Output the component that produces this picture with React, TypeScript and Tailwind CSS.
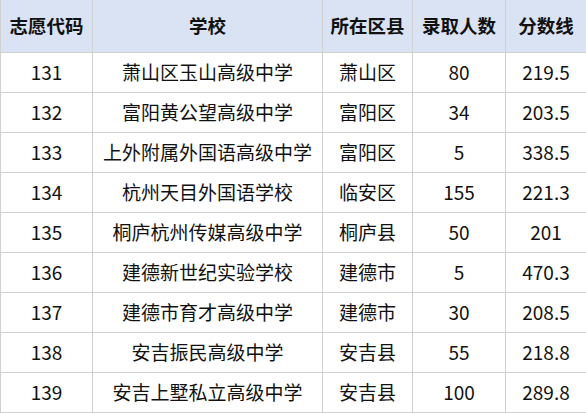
import React from "react";

const rows = [
  ["131", "萧山区玉山高级中学", "萧山区", "80", "219.5"],
  ["132", "富阳黄公望高级中学", "富阳区", "34", "203.5"],
  ["133", "上外附属外国语高级中学", "富阳区", "5", "338.5"],
  ["134", "杭州天目外国语学校", "临安区", "155", "221.3"],
  ["135", "桐庐杭州传媒高级中学", "桐庐县", "50", "201"],
  ["136", "建德新世纪实验学校", "建德市", "5", "470.3"],
  ["137", "建德市育才高级中学", "建德市", "30", "208.5"],
  ["138", "安吉振民高级中学", "安吉县", "55", "218.8"],
  ["139", "安吉上墅私立高级中学", "安吉县", "100", "289.8"],
];

const headers = ["志愿代码", "学校", "所在区县", "录取人数", "分数线"];
const widths = ["w-[92px]", "w-[230px]", "w-[90px]", "w-[93px]", "w-[81px]"];

export default function App() {
  return (
    <div className="w-[586px] h-[413px] bg-white overflow-hidden" style={{ fontFamily: '"Microsoft YaHei", "Noto Sans CJK SC", sans-serif' }}>
      <table className="border-collapse table-fixed w-[586px] text-[19px] text-[#111]">
        <colgroup>
          {widths.map((w, i) => (
            <col key={i} className={w} />
          ))}
        </colgroup>
        <thead>
          <tr className="h-[52px] bg-[#dae3f3]">
            {headers.map((h, i) => (
              <th key={i} className="border border-[#d0d0d0] border-t-0 font-bold text-center p-0 whitespace-nowrap text-[18.5px]">
                {h}
              </th>
            ))}
          </tr>
        </thead>
        <tbody>
          {rows.map((r, ri) => (
            <tr key={ri} className="h-[40px]">
              {r.map((c, ci) => (
                <td key={ci} className="border border-[#d0d0d0] text-center p-0 whitespace-nowrap">
                  {c}
                </td>
              ))}
            </tr>
          ))}
        </tbody>
      </table>
    </div>
  );
}
